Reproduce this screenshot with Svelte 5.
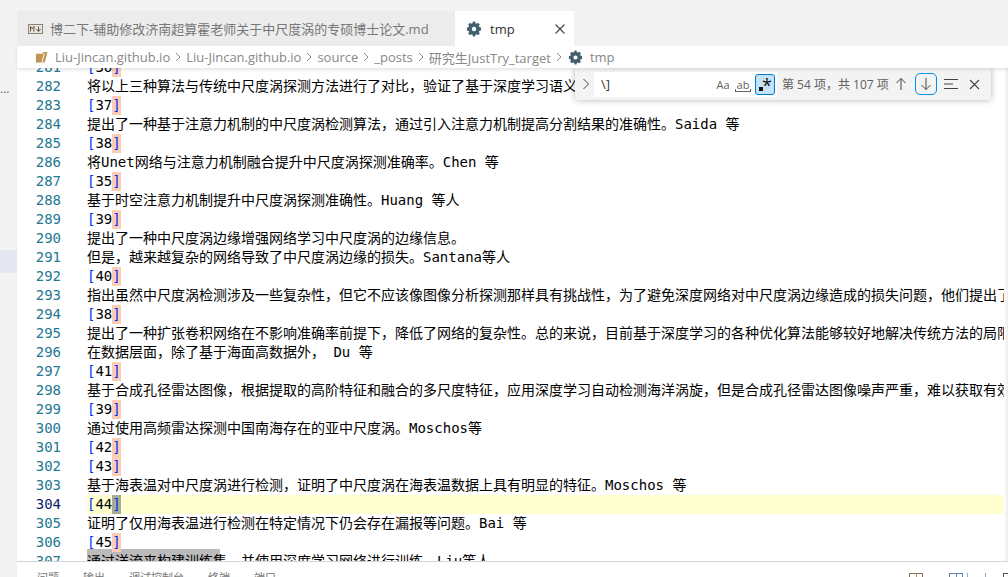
<script>
  const start = 281;
  const lines = [
    "[36]",
    "将以上三种算法与传统中尺度涡探测方法进行了对比，验证了基于深度学习语义分割的中尺度涡检测算法的优越性。",
    "[37]",
    "提出了一种基于注意力机制的中尺度涡检测算法，通过引入注意力机制提高分割结果的准确性。Saida 等",
    "[38]",
    "将Unet网络与注意力机制融合提升中尺度涡探测准确率。Chen 等",
    "[35]",
    "基于时空注意力机制提升中尺度涡探测准确性。Huang 等人",
    "[39]",
    "提出了一种中尺度涡边缘增强网络学习中尺度涡的边缘信息。",
    "但是，越来越复杂的网络导致了中尺度涡边缘的损失。Santana等人",
    "[40]",
    "指出虽然中尺度涡检测涉及一些复杂性，但它不应该像图像分析探测那样具有挑战性，为了避免深度网络对中尺度涡边缘造成的损失问题，他们提出了",
    "[38]",
    "提出了一种扩张卷积网络在不影响准确率前提下，降低了网络的复杂性。总的来说，目前基于深度学习的各种优化算法能够较好地解决传统方法的局限",
    "在数据层面，除了基于海面高数据外， Du 等",
    "[41]",
    "基于合成孔径雷达图像，根据提取的高阶特征和融合的多尺度特征，应用深度学习自动检测海洋涡旋，但是合成孔径雷达图像噪声严重，难以获取有效",
    "[39]",
    "通过使用高频雷达探测中国南海存在的亚中尺度涡。Moschos等",
    "[42]",
    "[43]",
    "基于海表温对中尺度涡进行检测，证明了中尺度涡在海表温数据上具有明显的特征。Moschos 等",
    "[44]",
    "证明了仅用海表温进行检测在特定情况下仍会存在漏报等问题。Bai 等",
    "[45]",
    "通过洋流来构建训练集，并使用深度学习网络进行训练。Liu等人"
  ];
  const rows = lines.map((text, i) => ({ n: start + i, text, ref: /^\[\d+\]$/.test(text) }));
  const crumbs = ["Liu-Jincan.github.io", "Liu-Jincan.github.io", "source", "_posts", "研究生JustTry_target"];
  const gear = "M8 5.800a2.200 2.200 0 1 0 0 4.400 2.200 2.200 0 0 0 0-4.400zM15 9.500l-1.700.4-.4 1 .9 1.500-1.800 1.800-1.500-.9-1 .4-.4 1.700H6.900l-.4-1.700-1-.4-1.500.9-1.800-1.800.9-1.500-.4-1L1 9.500V6.500l1.700-.4.4-1-.9-1.500L4 1.800l1.500.9 1-.4L6.900.6h2.200l.4 1.700 1 .4 1.500-.9 1.800 1.800-.9 1.500.4 1 1.700.4z";
</script>

<div class="window">
  <div class="activity"><span class="dots">...</span><span class="active-file"></span></div>
  <div class="main">
    <div class="tabs">
      <div class="tab">
        <svg class="md" viewBox="0 0 15 10" width="15" height="10"><rect x=".5" y=".5" width="14" height="9" fill="#e8e4dc" stroke="#8b8478"/><path d="M2.500 7.500v-5l1.700 2.200 1.700-2.200v5M10.500 2.500v4.500M8.500 5.200l2 2.300 2-2.300" fill="none" stroke="#5f5140" stroke-width="1"/></svg>
        <span>博二下-辅助修改济南超算霍老师关于中尺度涡的专硕博士论文.md</span>
      </div>
      <div class="tab active">
        <svg viewBox="0 0 16 16" width="16" height="16"><path d={gear} fill="#44606e" fill-rule="evenodd"/></svg>
        <span class="name">tmp</span>
        <svg class="close" viewBox="0 0 12 12" width="12" height="12"><path d="M1.500 1.500l9 9M10.500 1.500l-9 9" stroke="#424242" stroke-width="1.100"/></svg>
      </div>
    </div>
    <div class="crumbs">
      <svg class="folder" viewBox="0 0 14 14" width="13" height="14"><path d="M1 3.500h7l1-2h4.500L10.500 13H1z" fill="#c09553"/><path d="M10 3 7.500 13" stroke="#fff" stroke-width="1"/></svg>
      {#each crumbs as c}
        <span>{c}</span>
        <svg viewBox="0 0 6 10" width="6" height="10"><path d="M1 1l4 4-4 4" fill="none" stroke="#8a8a8a"/></svg>
      {/each}
      <svg class="gear" viewBox="0 0 16 16" width="15" height="15"><path d={gear} fill="#44606e" fill-rule="evenodd"/></svg>
      <span>tmp</span>
    </div>
    <div class="editor">
      <div class="scroller">
        {#each rows as r}
          <div class="row" class:current={r.n === 304}>
            <span class="num">{r.n}</span>
            <span class="code" class:sel={r.n === 307}>
              {#if r.ref}<span class="open">[</span>{r.text.slice(1, -1)}<span class="close-b" class:now={r.n === 304}>]</span>{:else}{r.text}{/if}
            </span>
          </div>
        {/each}
      </div>
      <div class="find">
        <svg class="chev" viewBox="0 0 8 12" width="8" height="12"><path d="M1.500 1l5 5-5 5" fill="none" stroke="#424242"/></svg>
        <div class="input">
          <span class="query">\]</span>
          <span class="opt">Aa</span>
          <span class="opt ab">ab</span>
          <span class="regex"><i></i>*</span>
        </div>
        <span class="count">第 54 项，共 107 项</span>
        <svg class="up" viewBox="0 0 14 14" width="14" height="14"><path d="M7 13V1.500M2.500 6 7 1.500 11.500 6" fill="none" stroke="#424242"/></svg>
        <span class="next"><svg viewBox="0 0 14 14" width="14" height="14"><path d="M7 1v11.500M2.500 8 7 12.500 11.500 8" fill="none" stroke="#424242"/></svg></span>
        <svg class="lines" viewBox="0 0 16 12" width="16" height="12"><path d="M1 1.500h14M1 6h9M1 10.500h14" fill="none" stroke="#424242"/></svg>
        <svg class="x" viewBox="0 0 11 11" width="11" height="11"><path d="M1 1l9 9M10 1 1 10" fill="none" stroke="#424242" stroke-width="1.100"/></svg>
      </div>
    </div>
    <div class="panel">
      <span>问题</span><span>输出</span><span>调试控制台</span><span>终端</span><span>端口</span>
      <div class="panel-icons">
        <i class="box split"></i>
        <i class="box split blue"></i>
        <i class="pip"></i>
        <i class="pip last"></i>
        <i class="box dark"></i>
      </div>
    </div>
  </div>
</div>

<style>
  :global(body) {
    margin: 0;
    background: #fff;
    overflow: hidden;
  }

  .window {
    display: flex;
    width: 1008px;
    height: 577px;
    overflow: hidden;
    background: #f3f3f3;
    font-family: "Open Sans", "Noto Sans CJK SC", sans-serif;
  }

  .activity {
    width: 17px;
    flex: none;
    padding-top: 83px;
    box-sizing: border-box;
    background: #f3f3f3;
    color: #666;
    font-size: 12px;
    line-height: 12px;
  }

  .dots {
    display: block;
    height: 167px;
  }

  .active-file {
    display: block;
    height: 23px;
    background: #e4e6f1;
  }

  .main {
    flex: 1;
    min-width: 0;
    display: flex;
    flex-direction: column;
    padding-top: 11px;
  }

  .tabs {
    display: flex;
    height: 35px;
    flex: none;
    background: #f3f3f3;
  }

  .tab {
    display: flex;
    align-items: center;
    gap: 7px;
    width: 438px;
    box-sizing: border-box;
    padding-left: 11px;
    background: #ececec;
    color: #777;
    font-size: 13px;
    white-space: nowrap;
  }

  .tab.active {
    width: 119px;
    gap: 8px;
    background: #fff;
    color: #333;
  }

  .tab .name {
    flex: 1;
  }

  .tab .close {
    margin-right: 8px;
  }

  .crumbs {
    display: flex;
    align-items: center;
    gap: 5px;
    height: 22px;
    flex: none;
    padding-left: 18px;
    background: #fff;
    color: #888;
    font-size: 13px;
    white-space: nowrap;
    box-shadow: 0 2px 3px rgba(0, 0, 0, 0.1);
    position: relative;
    z-index: 2;
  }

  .folder {
    margin-right: 2px;
  }

  .gear {
    margin: 0 2px 0 1px;
  }

  .editor {
    flex: 1;
    min-height: 0;
    position: relative;
    overflow: hidden;
    background: #fff;
  }

  .editor::after {
    content: "";
    position: absolute;
    top: 0;
    right: 0;
    bottom: 0;
    width: 4px;
    background: linear-gradient(to right, #fff, #ececec);
  }

  .scroller {
    margin-top: -10px;
    isolation: isolate;
  }

  .row {
    display: flex;
    height: 19px;
    line-height: 19px;
    font-family: "DejaVu Sans Mono", "Noto Sans CJK SC", monospace;
    font-size: 14px;
    white-space: nowrap;
    color: #000;
  }

  .num {
    width: 44px;
    flex: none;
    text-align: right;
    color: #237893;
  }

  .current .num {
    color: #0b216f;
  }

  .code {
    flex: 1;
    min-width: 0;
    margin-left: 26px;
  }

  .current .code {
    background: #ffffcf;
  }

  .code.sel {
    position: relative;
  }

  .code.sel::before {
    content: "";
    position: absolute;
    z-index: -1;
    top: -3px;
    left: 0;
    width: 133px;
    height: 22px;
    background: #bbb;
  }

  .open {
    color: #0431fa;
  }

  .close-b {
    display: inline-block;
    color: #0431fa;
    background: #fbcdb5;
    height: 19px;
  }

  .close-b.now {
    background: #a8ac94;
  }

  .find {
    position: absolute;
    top: 0;
    right: 17px;
    width: 416px;
    height: 32px;
    display: flex;
    align-items: center;
    box-sizing: border-box;
    background: #f3f3f3;
    box-shadow: 0 0 6px rgba(0, 0, 0, 0.3);
    border-radius: 0 0 3px 3px;
    color: #616161;
    font-size: 12px;
    padding-left: 7px;
    z-index: 1;
  }

  .chev {
    margin-right: 4px;
  }

  .input {
    display: flex;
    align-items: center;
    width: 183px;
    height: 25px;
    flex: none;
    background: #fff;
    box-sizing: border-box;
    padding: 0 2px 0 7px;
    gap: 4px;
  }

  .query {
    flex: 1;
    color: #333;
    font-size: 13px;
  }

  .opt {
    font-size: 11px;
    width: 16px;
    text-align: center;
    position: relative;
  }

  .ab::after {
    content: "";
    position: absolute;
    left: 0;
    right: 0;
    bottom: 0;
    height: 2px;
    border: 1px solid #616161;
    border-top: none;
  }

  .regex {
    width: 20px;
    height: 21px;
    box-sizing: border-box;
    position: relative;
    background: #c5e3f8;
    border: 1px solid #007acc;
    border-radius: 3px;
    color: #111;
    font-size: 18px;
    line-height: 21px;
    text-align: right;
    padding-right: 2px;
  }

  .regex i {
    position: absolute;
    left: 3px;
    bottom: 3px;
    width: 4px;
    height: 4px;
    background: #111;
  }

  .count {
    margin-left: 5px;
    font-size: 12px;
    white-space: nowrap;
  }

  .up {
    margin-left: 5px;
  }

  .next {
    display: flex;
    align-items: center;
    justify-content: center;
    width: 22px;
    height: 22px;
    margin-left: 7px;
    box-sizing: border-box;
    border: 1px solid #0090f1;
    border-radius: 5px;
  }

  .lines {
    margin-left: 6px;
  }

  .x {
    margin-left: 10px;
  }

  .panel {
    display: flex;
    align-items: flex-start;
    height: 16px;
    flex: none;
    gap: 24px;
    padding-left: 20px;
    overflow: hidden;
    background: #fff;
    border-top: 1px solid #d4d4d4;
    color: #777;
    font-size: 11px;
    line-height: 32px;
    box-sizing: border-box;
    position: relative;
    z-index: 2;
  }

  .panel-icons {
    margin-left: auto;
    display: flex;
    gap: 4px;
    padding-top: 11px;
    margin-right: -9px;
  }

  .box {
    display: block;
    width: 14px;
    height: 14px;
    box-sizing: border-box;
    border: 1px solid #555;
  }

  .split {
    margin-right: 22px;
    border-color: #8a6d4d;
    background: linear-gradient(#c98a4b, #c98a4b) no-repeat center / 1px 100%;
  }

  .split.blue {
    margin-right: 0;
    border-color: #5c7fa8;
    background: linear-gradient(#5c8fc9, #5c8fc9) no-repeat center / 1px 100%;
  }

  .pip {
    display: block;
    width: 1px;
    height: 6px;
    background: #8fa8c9;
  }

  .pip.last {
    margin: 0 13px;
  }
</style>
